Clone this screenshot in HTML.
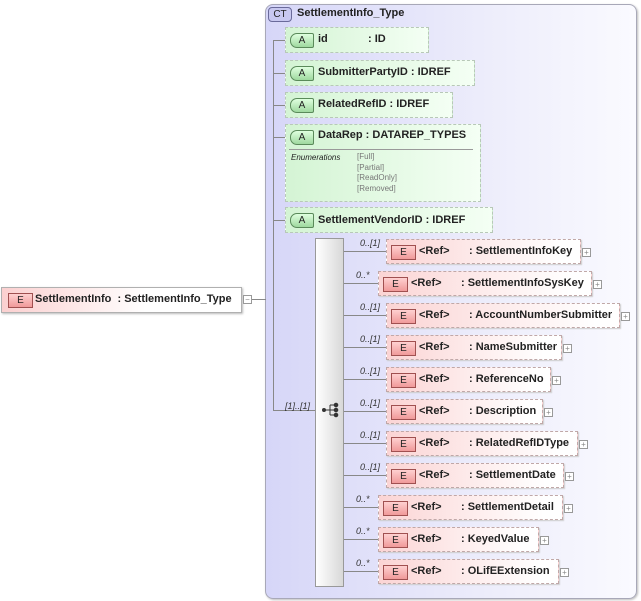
<!DOCTYPE html>
<html><head><meta charset="utf-8"><style>
body{margin:0;width:641px;height:601px;background:#fff;position:relative;overflow:hidden;font-family:"Liberation Sans",Arial,sans-serif;font-size:11px;color:#222}
.a{position:absolute}
.ct{left:265px;top:4px;width:370px;height:593px;border:1px solid #a8a8b8;border-radius:8px;background:linear-gradient(90deg,#d6d6f8,#ededfb 60%,#fafaff);box-shadow:1px 1px 2px #bbb}
.att{position:absolute;border:1px dashed #b8c8b8;background:linear-gradient(90deg,#d4f4d4,#f4fff4);box-sizing:border-box;font-weight:bold}
.ab{position:absolute;left:4px;top:5px;width:22px;height:13px;border:1px solid #5a8a5a;border-radius:7px 2px 2px 7px;background:linear-gradient(#dfffdf,#9fd89f);font-size:10px;text-align:center;line-height:13px;font-weight:normal}
.el{position:absolute;height:25px;border:1px dashed #c0a8a8;background:linear-gradient(90deg,#fbd4d4,#fff 90%);box-sizing:border-box;font-weight:bold;box-shadow:1px 1px 1px #ccc}
.eb{position:absolute;left:4px;top:5px;width:23px;height:13px;border:1px solid #a05050;background:linear-gradient(#ffd0d0,#f09a9a);font-size:10px;text-align:center;line-height:13px;font-weight:normal}
.pl{position:absolute;width:7px;height:7px;border:1px solid #999;background:#fff;font-size:8px;line-height:7px;text-align:center;color:#888}
.ln{position:absolute;background:#888}
.m{position:absolute;font-style:italic;font-size:9px;color:#333}
</style></head><body>
<div class="a ct"></div>
<div class="a" style="left:268px;top:7px;width:22px;height:13px;border:1px solid #6a6a9a;border-radius:4px;background:#c8c8f0;font-size:10px;text-align:center;line-height:13px">CT</div>
<div class="a" style="left:297px;top:7px;font-weight:bold">SettlementInfo_Type</div>

<div class="ln" style="left:273px;top:40px;width:1px;height:371px"></div>
<div class="ln" style="left:273px;top:40px;width:12px;height:1px"></div>
<div class="ln" style="left:273px;top:73px;width:12px;height:1px"></div>
<div class="ln" style="left:273px;top:105px;width:12px;height:1px"></div>
<div class="ln" style="left:273px;top:137px;width:12px;height:1px"></div>
<div class="ln" style="left:273px;top:220px;width:12px;height:1px"></div>

<div class="att" style="left:285px;top:27px;width:144px;height:26px"><div class="ab">A</div><span class="a" style="left:32px;top:5px">id</span><span class="a" style="left:82px;top:5px">: ID</span></div>
<div class="att" style="left:285px;top:60px;width:190px;height:26px"><div class="ab">A</div><span class="a" style="left:32px;top:5px">SubmitterPartyID : IDREF</span></div>
<div class="att" style="left:285px;top:92px;width:168px;height:26px"><div class="ab">A</div><span class="a" style="left:32px;top:5px">RelatedRefID : IDREF</span></div>
<div class="att" style="left:285px;top:124px;width:196px;height:78px"><div class="ab">A</div><span class="a" style="left:32px;top:4px">DataRep : DATAREP_TYPES</span>
<div class="a" style="left:3px;top:24px;width:184px;height:1px;background:#999"></div>
<span class="a" style="left:5px;top:28px;font-size:8px;font-style:italic;font-weight:normal">Enumerations</span>
<span class="a" style="left:71px;top:27px;font-size:8px;font-weight:normal;color:#777;line-height:10.5px">[Full]<br>[Partial]<br>[ReadOnly]<br>[Removed]</span></div>
<div class="att" style="left:285px;top:207px;width:208px;height:26px"><div class="ab">A</div><span class="a" style="left:32px;top:6px">SettlementVendorID : IDREF</span></div>

<div class="ln" style="left:273px;top:410px;width:42px;height:1px"></div>
<div class="m" style="left:285px;top:401px">[1]..[1]</div>
<div class="a" style="left:315px;top:238px;width:29px;height:349px;border:1px solid #999;background:linear-gradient(90deg,#fff,#d8d8d8);box-sizing:border-box"></div>
<svg class="a" style="left:321px;top:402px" width="20" height="16"><g fill="#333" stroke="#333"><circle cx="3" cy="8" r="1.5"/><line x1="3" y1="8" x2="9" y2="8"/><line x1="9" y1="3" x2="9" y2="13"/><line x1="9" y1="3" x2="14" y2="3"/><line x1="9" y1="8" x2="14" y2="8"/><line x1="9" y1="13" x2="14" y2="13"/><circle cx="15" cy="3" r="1.8"/><circle cx="15" cy="8" r="1.8"/><circle cx="15" cy="13" r="1.8"/></g></svg>

<div class="a" style="left:1px;top:287px;width:241px;height:26px;border:1px solid #b0b0b0;background:linear-gradient(90deg,#fbd0d0,#fff 60%);box-sizing:border-box;box-shadow:1px 1px 2px #bbb;font-weight:bold"><div class="eb" style="left:6px;top:5px">E</div><span class="a" style="left:33px;top:5px">SettlementInfo&nbsp; : SettlementInfo_Type</span></div>
<div class="pl" style="left:243px;top:295px">−</div>
<div class="ln" style="left:252px;top:299px;width:14px;height:1px"></div>

<div id="rows"></div>
<script>
var r=[["0..[1]",386,581,"SettlementInfoKey"],["0..*",378,592,"SettlementInfoSysKey"],["0..[1]",386,620,"AccountNumberSubmitter"],["0..[1]",386,562,"NameSubmitter"],["0..[1]",386,551,"ReferenceNo"],["0..[1]",386,543,"Description"],["0..[1]",386,578,"RelatedRefIDType"],["0..[1]",386,564,"SettlementDate"],["0..*",378,563,"SettlementDetail"],["0..*",378,539,"KeyedValue"],["0..*",378,559,"OLifEExtension"]];
var h="";
for(var i=0;i<r.length;i++){var y=239+i*32,x=r[i][1],w=r[i][2]-x;
h+='<div class="ln" style="left:344px;top:'+(y+12)+'px;width:'+(x-344)+'px;height:1px"></div>';
h+='<div class="m" style="left:'+(x-26+(r[i][0]=="0..*"?4:0))+'px;top:'+(y-1)+'px">'+r[i][0]+'</div>';
h+='<div class="el" style="left:'+x+'px;top:'+y+'px;width:'+w+'px"><div class="eb">E</div><span class="a" style="left:32px;top:5px">&lt;Ref&gt;</span><span class="a" style="left:82px;top:5px">: '+r[i][3]+'</span></div>';
h+='<div class="pl" style="left:'+(x+w+1)+'px;top:'+(y+9)+'px">+</div>';}
document.getElementById("rows").innerHTML=h;
</script>
</body></html>
